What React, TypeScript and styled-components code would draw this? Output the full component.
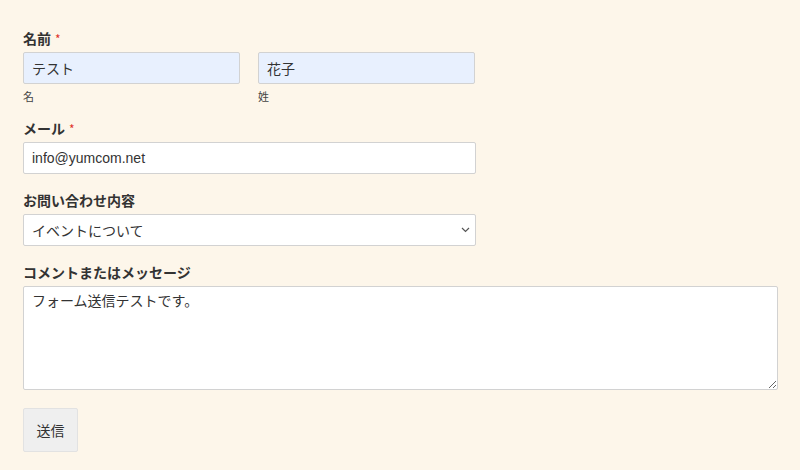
import React from "react";
import styled, { createGlobalStyle } from "styled-components";

const Global = createGlobalStyle`
  html, body { margin: 0; padding: 0; background: #fdf6ea; }
  body { font-family: "Noto Sans CJK JP", "Liberation Sans", sans-serif; color: #333; }
`;

const Form = styled.form`
  padding: 28px 23px 20px 23px;
  display: flex;
  flex-direction: column;
`;

const Group = styled.div<{ $mb: number }>`
  display: flex;
  flex-direction: column;
  margin-bottom: ${(p) => p.$mb}px;
`;

const Label = styled.label`
  font-size: 14px;
  font-weight: 700;
  line-height: 20px;
  height: 20px;
  margin-bottom: 4px;
  color: #333;
  font-family: "Noto Sans CJK JP", sans-serif;
`;

const Req = styled.span`
  color: #e0342a;
  font-size: 12px;
  margin-left: 4px;
  font-weight: 400;
`;

const Row = styled.div`
  display: flex;
  gap: 18px;
`;

const Col = styled.div`
  display: flex;
  flex-direction: column;
  width: 217px;
`;

const Input = styled.input<{ $filled?: boolean; $w?: number }>`
  box-sizing: border-box;
  width: ${(p) => (p.$w ? `${p.$w}px` : "100%")};
  height: 32px;
  padding: 0 8px;
  border: 1px solid #d2d2d2;
  border-radius: 2px;
  background: ${(p) => (p.$filled ? "#e8f0fe" : "#fff")};
  font-family: "Liberation Sans", "Noto Sans CJK JP", sans-serif;
  font-size: 14px;
  color: #333;
  outline: none;
`;

const Sub = styled.span`
  font-size: 11px;
  line-height: 16px;
  margin-top: 4px;
  color: #444;
`;

const SelectWrap = styled.div`
  position: relative;
  width: 453px;
`;

const Select = styled.select`
  appearance: none;
  box-sizing: border-box;
  width: 100%;
  height: 32px;
  padding: 0 8px;
  border: 1px solid #d2d2d2;
  border-radius: 2px;
  background: #fff;
  font-family: "Noto Sans CJK JP", sans-serif;
  font-size: 14px;
  color: #333;
  outline: none;
`;

const Chevron = styled.svg`
  position: absolute;
  right: 6px;
  top: 13px;
  pointer-events: none;
`;

const TextArea = styled.textarea`
  box-sizing: border-box;
  width: 755px;
  height: 104px;
  padding: 3px 8px;
  border: 1px solid #d2d2d2;
  border-radius: 2px;
  background: #fff;
  font-family: "Noto Sans CJK JP", sans-serif;
  font-size: 14px;
  line-height: 20px;
  color: #333;
  outline: none;
  resize: both;
`;

const Button = styled.button`
  align-self: flex-start;
  box-sizing: border-box;
  width: 55px;
  height: 44px;
  border: 1px solid #e2e2e2;
  border-radius: 2px;
  background: #efefef;
  font-family: "Noto Sans CJK JP", sans-serif;
  font-size: 14px;
  color: #333;
  padding: 0;
`;

export default function App() {
  return (
    <>
      <Global />
      <Form onSubmit={(e) => e.preventDefault()}>
        <Group $mb={14}>
          <Label>
            名前<Req>*</Req>
          </Label>
          <Row>
            <Col>
              <Input $filled defaultValue="テスト" />
              <Sub>名</Sub>
            </Col>
            <Col>
              <Input $filled defaultValue="花子" />
              <Sub>姓</Sub>
            </Col>
          </Row>
        </Group>
        <Group $mb={16}>
          <Label>
            メール<Req>*</Req>
          </Label>
          <Input $w={453} defaultValue="info@yumcom.net" />
        </Group>
        <Group $mb={16}>
          <Label>お問い合わせ内容</Label>
          <SelectWrap>
            <Select defaultValue="event">
              <option value="event">イベントについて</option>
            </Select>
            <Chevron width="9" height="6" viewBox="0 0 9 6">
              <path d="M1 1l3.5 3.5L8 1" fill="none" stroke="#555" strokeWidth="1.2" />
            </Chevron>
          </SelectWrap>
        </Group>
        <Group $mb={18}>
          <Label>コメントまたはメッセージ</Label>
          <TextArea defaultValue="フォーム送信テストです。" />
        </Group>
        <Button type="submit">送信</Button>
      </Form>
    </>
  );
}
